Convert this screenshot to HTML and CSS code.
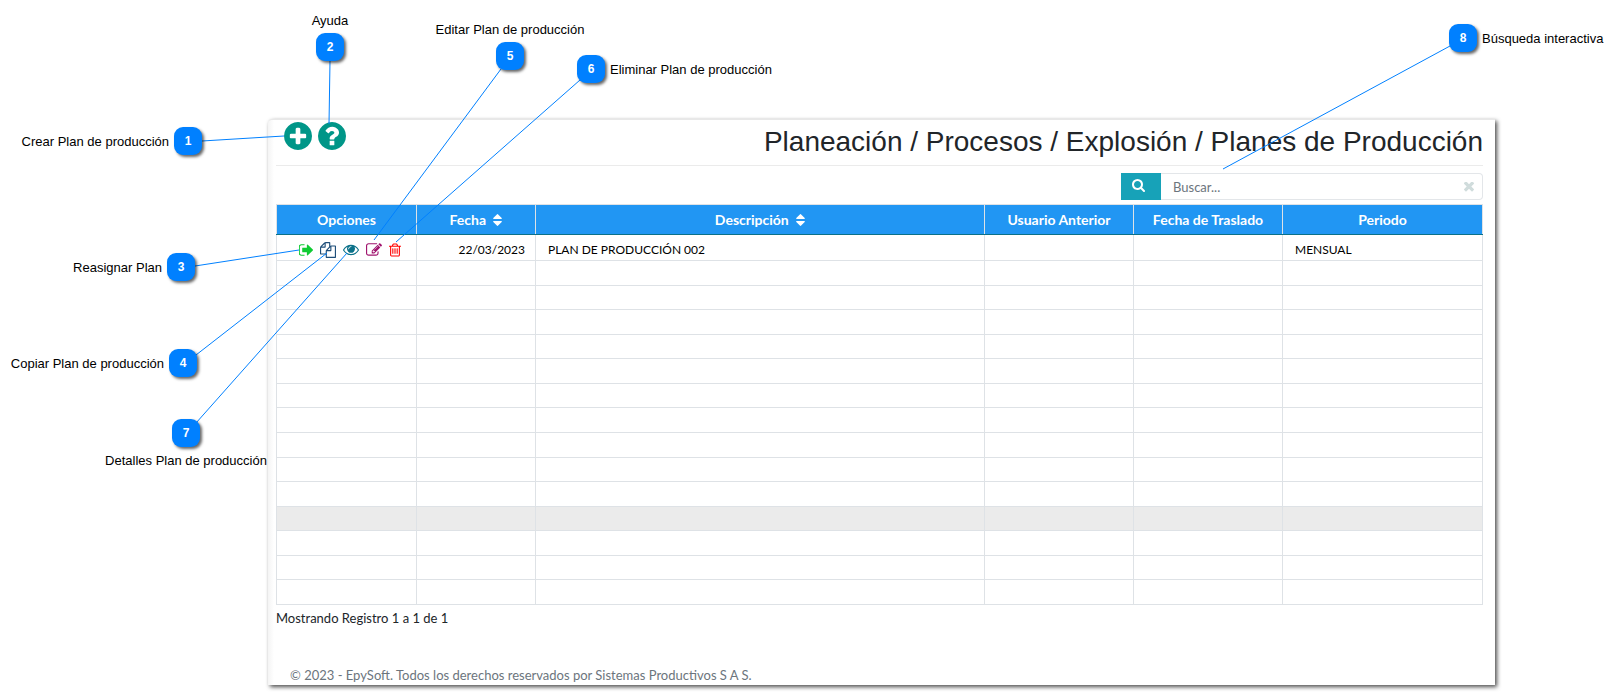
FILE: index.html
```html
<!DOCTYPE html>
<html lang="es">
<head>
<meta charset="utf-8">
<title>Planes de Producción</title>
<link rel="stylesheet" href="styles.css">
</head>
<body>
<main class="panel">
  <header class="panel-header">
    <div class="main-actions">
      <button class="icon-button" type="button" aria-label="Crear Plan de producción">
        <svg class="icon-round" viewBox="0 128 1536 1536"><path d="M1216 960v-128q0-26-19-45t-45-19h-256v-256q0-26-19-45t-45-19h-128q-26 0-45 19t-19 45v256h-256q-26 0-45 19t-19 45v128q0 26 19 45t45 19h256v256q0 26 19 45t45 19h128q26 0 45-19t19-45v-256h256q26 0 45-19t19-45zm320-64q0 209-103 385.500t-279.500 279.500-385.500 103-385.500-103-279.500-279.500-103-385.500 103-385.500 279.500-279.500 385.500-103 385.500 103 279.500 279.500 103 385.500z"/></svg>
      </button>
      <button class="icon-button" type="button" aria-label="Ayuda">
        <svg class="icon-round" viewBox="128 128 1536 1536"><path d="M1024 1376v-192q0-14-9-23t-23-9h-192q-14 0-23 9t-9 23v192q0 14 9 23t23 9h192q14 0 23-9t9-23zm256-672q0-88-55.500-163t-138.500-116-170-41q-243 0-371 213-15 24 8 42l132 100q7 6 19 6 16 0 25-12 53-68 86-92 34-24 86-24 48 0 85.500 26t37.500 59q0 38-20 61t-68 45q-63 28-115.500 86.500t-52.500 125.500v36q0 14 9 23t23 9h192q14 0 23-9t9-23q0-19 21.500-49.500t54.500-49.500q32-18 49-28.500t46-35 44.500-48 28-60.500 12.500-81zm384 192q0 209-103 385.500t-279.500 279.500-385.500 103-385.500-103-279.500-279.500-103-385.500 103-385.500 279.500-279.500 385.500-103 385.500 103 279.500 279.500 103 385.500z"/></svg>
      </button>
    </div>
    <h1 class="title">Planeación / Procesos / Explosión / Planes de Producción</h1>
  </header>

  <form class="search">
    <button class="search-button" type="button" aria-label="Buscar">
      <svg class="icon-search" viewBox="64 128 1664 1664"><path d="M1216 832q0-185-131.500-316.500t-316.500-131.500-316.500 131.500-131.500 316.500 131.500 316.500 316.500 131.500 316.500-131.500 131.500-316.500zm512 832q0 52-38 90t-90 38q-54 0-90-38l-343-342q-179 124-399 124-143 0-273.500-55.500t-225-150-150-225-55.500-273.500 55.500-273.500 150-225 225-150 273.500-55.500 273.500 55.500 225 150 150 225 55.500 273.500q0 220-124 399l343 343q37 37 37 90z"/></svg>
    </button>
    <div class="search-field">
      <input class="search-input" type="text" placeholder="Buscar..." aria-label="Buscar">
      <button class="icon-button clear" type="button" aria-label="Limpiar">
        <svg class="icon-clear" viewBox="302 434 1188 1188"><path d="M1490 1322q0 40-28 68l-136 136q-28 28-68 28t-68-28l-294-294-294 294q-28 28-68 28t-68-28l-136-136q-28-28-28-68t28-68l294-294-294-294q-28-28-28-68t28-68l136-136q28-28 68-28t68 28l294 294 294-294q28-28 68-28t68 28l136 136q28 28 28 68t-28 68l-294 294 294 294q28 28 28 68z"/></svg>
      </button>
    </div>
  </form>

  <table class="grid">
    <colgroup>
      <col class="col-options"><col class="col-date"><col><col class="col-user"><col class="col-user"><col class="col-period">
    </colgroup>
    <thead>
      <tr>
        <th>Opciones</th>
        <th>Fecha <svg class="icon-sort" viewBox="384 192 1024 1408"><path d="M1408 1088q0 26-19 45l-448 448q-19 19-45 19t-45-19l-448-448q-19-19-19-45t19-45 45-19h896q26 0 45 19t19 45zm0-384q0 26-19 45t-45 19h-896q-26 0-45-19t-19-45 19-45l448-448q19-19 45-19t45 19l448 448q19 19 19 45z"/></svg></th>
        <th>Descripción <svg class="icon-sort" viewBox="384 192 1024 1408"><path d="M1408 1088q0 26-19 45l-448 448q-19 19-45 19t-45-19l-448-448q-19-19-19-45t19-45 45-19h896q26 0 45 19t19 45zm0-384q0 26-19 45t-45 19h-896q-26 0-45-19t-19-45 19-45l448-448q19-19 45-19t45 19l448 448q19 19 19 45z"/></svg></th>
        <th>Usuario Anterior</th>
        <th>Fecha de Traslado</th>
        <th>Periodo</th>
      </tr>
    </thead>
    <tbody>
      <tr class="record">
        <td>
          <div class="row-actions">
            <button class="icon-button reassign" type="button" aria-label="Reasignar Plan"><svg class="icon-s" viewBox="96 128 1536 1536"><path d="M704 1440q0 4 1 20t.5 26.500-3 23.500-10 19.500-20.500 6.500h-320q-119 0-203.500-84.500t-84.500-203.500v-704q0-119 84.500-203.500t203.500-84.500h320q13 0 22.500 9.500t9.500 22.500q0 4 1 20t.5 26.500-3 23.500-10 19.500-20.500 6.500h-320q-66 0-113 47t-47 113v704q0 66 47 113t113 47h312l11.500 1 11.500 3 8 5.500 7 9 2 13.500zm928-544q0 26-19 45l-544 544q-19 19-45 19t-45-19-19-45v-288h-448q-26 0-45-19t-19-45v-384q0-26 19-45t45-19h448v-288q0-26 19-45t45-19 45 19l544 544q19 19 19 45z"/></svg></button>
            <button class="icon-button copy" type="button" aria-label="Copiar Plan de producción"><svg class="icon-m" viewBox="0 0 1792 1792"><path d="M1696 384q40 0 68 28t28 68v1216q0 40-28 68t-68 28h-960q-40 0-68-28t-28-68v-288h-544q-40 0-68-28t-28-68v-672q0-40 20-88t48-76l408-408q28-28 76-48t88-20h416q40 0 68 28t28 68v328q68-40 128-40h416zm-544 213l-299 299h299v-299zm-640-384l-299 299h299v-299zm196 647l316-316v-416h-384v416q0 40-28 68t-68 28h-416v640h512v-256q0-40 20-88t48-76zm956 804v-1152h-384v416q0 40-28 68t-68 28h-416v640h896z"/></svg></button>
            <button class="icon-button view" type="button" aria-label="Detalles Plan de producción"><svg class="icon-m" viewBox="0 64 1792 1792"><path d="M1664 960q-152-236-381-353 61 104 61 225 0 185-131.500 316.500t-316.500 131.500-316.500-131.500-131.500-316.500q0-121 61-225-229 117-381 353 133 205 333.500 326.500t434.500 121.500 434.500-121.500 333.500-326.500zm-720-384q0-20-14-34t-34-14q-125 0-214.500 89.500t-89.500 214.500q0 20 14 34t34 14 34-14 14-34q0-86 61-147t147-61q20 0 34-14t14-34zm848 384q0 34-20 69-140 230-376.500 368.500t-499.500 138.500-499.500-139-376.500-368q-20-35-20-69t20-69q140-229 376.500-368t499.500-139 499.500 139 376.500 368q20 35 20 69z"/></svg></button>
            <button class="icon-button edit" type="button" aria-label="Editar Plan de producción"><svg class="icon-m" viewBox="0 0 1792 1792"><path d="M888 1184l116-116-152-152-116 116v56h96v96h56zm440-720q-16-16-33 1l-350 350q-17 17-1 33t33-1l350-350q17-17 1-33zm80 594v190q0 119-84.500 203.500t-203.500 84.500h-832q-119 0-203.500-84.500t-84.500-203.500v-832q0-119 84.500-203.500t203.500-84.500h832q63 0 117 25 15 7 18 23 3 17-9 29l-49 49q-14 14-32 8-23-6-45-6h-832q-66 0-113 47t-47 113v832q0 66 47 113t113 47h832q66 0 113-47t47-113v-126q0-13 9-22l64-64q15-15 35-7t20 29zm-96-738l288 288-672 672h-288v-288zm444 132l-92 92-288-288 92-92q28-28 68-28t68 28l152 152q28 28 28 68t-28 68z"/></svg></button>
            <button class="icon-button remove" type="button" aria-label="Eliminar Plan de producción"><svg class="icon-trash" viewBox="192 128 1408 1536"><path d="M704 736v576q0 14-9 23t-23 9h-64q-14 0-23-9t-9-23v-576q0-14 9-23t23-9h64q14 0 23 9t9 23zm256 0v576q0 14-9 23t-23 9h-64q-14 0-23-9t-9-23v-576q0-14 9-23t23-9h64q14 0 23 9t9 23zm256 0v576q0 14-9 23t-23 9h-64q-14 0-23-9t-9-23v-576q0-14 9-23t23-9h64q14 0 23 9t9 23zm128 724v-948h-896v948q0 22 7 40.500t14.500 27 10.500 8.500h832q3 0 10.500-8.500t14.500-27 7-40.500zm-672-1076h448l-48-117q-7-9-17-11h-317q-10 2-17 11zm928 32v64q0 14-9 23t-23 9h-96v948q0 83-47 143.500t-113 60.500h-832q-66 0-113-58.500t-47-141.500v-952h-96q-14 0-23-9t-9-23v-64q0-14 9-23t23-9h309l70-167q15-37 54-63t79-26h320q40 0 79 26t54 63l70 167h309q14 0 23 9t9 23z"/></svg></button>
          </div>
        </td>
        <td class="date">22/03/2023</td>
        <td>PLAN DE PRODUCCIÓN 002</td>
        <td></td>
        <td></td>
        <td>MENSUAL</td>
      </tr>
      <tr><td></td><td></td><td></td><td></td><td></td><td></td></tr>
      <tr><td></td><td></td><td></td><td></td><td></td><td></td></tr>
      <tr><td></td><td></td><td></td><td></td><td></td><td></td></tr>
      <tr><td></td><td></td><td></td><td></td><td></td><td></td></tr>
      <tr><td></td><td></td><td></td><td></td><td></td><td></td></tr>
      <tr><td></td><td></td><td></td><td></td><td></td><td></td></tr>
      <tr><td></td><td></td><td></td><td></td><td></td><td></td></tr>
      <tr><td></td><td></td><td></td><td></td><td></td><td></td></tr>
      <tr><td></td><td></td><td></td><td></td><td></td><td></td></tr>
      <tr><td></td><td></td><td></td><td></td><td></td><td></td></tr>
      <tr class="highlight"><td></td><td></td><td></td><td></td><td></td><td></td></tr>
      <tr><td></td><td></td><td></td><td></td><td></td><td></td></tr>
      <tr><td></td><td></td><td></td><td></td><td></td><td></td></tr>
      <tr><td></td><td></td><td></td><td></td><td></td><td></td></tr>
    </tbody>
  </table>
  <p class="summary">Mostrando Registro 1 a 1 de 1</p>
  <footer class="footer">© 2023 - EpySoft. Todos los derechos reservados por Sistemas Productivos S A S.</footer>
</main>

<svg class="leaders leaders-left" width="640" height="480" viewBox="0 0 640 480" aria-hidden="true">
  <path d="M202 141L284 136M330 61L329 124M195 266L299 250M196 355L327 253M196 423L347 253M501 69L374 240M580 80L396 242"/>
</svg>
<svg class="leaders leaders-right" width="240" height="130" viewBox="0 0 240 130" aria-hidden="true">
  <path d="M235 6L8 129"/>
</svg>

<div class="callout c1"><span class="label before">Crear Plan de producción</span><span class="badge">1</span></div>
<div class="callout c2"><span class="label above">Ayuda</span><span class="badge">2</span></div>
<div class="callout c3"><span class="label before">Reasignar Plan</span><span class="badge">3</span></div>
<div class="callout c4"><span class="label before">Copiar Plan de producción</span><span class="badge">4</span></div>
<div class="callout c5"><span class="label above">Editar Plan de producción</span><span class="badge">5</span></div>
<div class="callout c6"><span class="badge">6</span><span class="label after">Eliminar Plan de producción</span></div>
<div class="callout c7"><span class="badge">7</span><span class="label below">Detalles Plan de producción</span></div>
<div class="callout c8"><span class="badge">8</span><span class="label after">Búsqueda interactiva</span></div>
</body>
</html>
```

FILE: styles.css
```css
* {
  box-sizing: border-box;
}

body {
  position: relative;
  margin: 0;
  padding: 119px 123px 9px 268px;
  background: #fff;
  color: #212529;
  font-family: Lato, sans-serif;
  font-size: 13px;
}

svg {
  display: block;
  fill: currentColor;
}

button {
  font: inherit;
  cursor: pointer;
}

.panel {
  padding: 0 12px 0 8px;
  border-top: 1px solid #e8e8e8;
  border-top-left-radius: 4px;
  background: linear-gradient(to right, #f4f4f4, #fff 6px);
  box-shadow: 2px 2px 4px rgba(0, 0, 0, 0.7);
}

.panel-header {
  display: flex;
  align-items: flex-start;
  justify-content: space-between;
  height: 46px;
  border-bottom: 1px solid #ebebeb;
}

.main-actions {
  display: flex;
  gap: 6px;
  padding: 2px 8px;
}

.icon-button {
  flex: none;
  padding: 0;
  border: 0;
  background: none;
}

.main-actions .icon-button {
  color: #009688;
}

.icon-round {
  width: 28px;
  height: 28px;
}

.title {
  margin: 0;
  padding-top: 5px;
  font: 400 28px/34px "Liberation Sans", Arial, sans-serif;
}

.search {
  display: flex;
  justify-content: flex-end;
  margin: 7px 0 4px;
  height: 27px;
}

.search-button {
  width: 40px;
  padding: 0 11px 2px;
  border: 0;
  background: #17a2b8;
  color: #fff;
}

.icon-search {
  width: 13px;
  height: 13px;
}

.search-field {
  display: flex;
  align-items: center;
  width: 322px;
  padding: 0 8px 0 12px;
  border: 1px solid #e3e6e9;
  border-left: 0;
  border-radius: 0 4px 4px 0;
  background: #fff;
}

.search-input {
  flex: 1;
  min-width: 0;
  padding: 0;
  border: 0;
  outline: 0;
  background: none;
  color: #495057;
  font: 13px/20px Lato, sans-serif;
}

.search-input::placeholder {
  color: #6c757d;
  opacity: 1;
}

.clear {
  color: #d0dcdc;
}

.icon-clear {
  width: 10px;
  height: 10px;
}

.grid {
  width: 100%;
  height: 401px;
  border-collapse: collapse;
  table-layout: fixed;
  background: #fff;
  color: #000;
  font-size: 12px;
}

.col-options { width: 140px; }
.col-date { width: 119px; }
.col-user { width: 149px; }
.col-period { width: 200px; }

.grid th,
.grid td {
  border: 1px solid #dee2e6;
}

.grid th {
  height: 30px;
  padding: 0;
  border-bottom-color: #0b7189;
  background: #2196f3;
  color: #fff;
  font-size: 14px;
  font-weight: 700;
  line-height: 20px;
}

.icon-sort {
  display: inline-block;
  width: 9px;
  height: 12px;
  margin-left: 4px;
  vertical-align: -1px;
}

.grid td {
  padding: 0 12px;
}

.grid .record td {
  height: 26px;
  padding-top: 4px;
}

.grid td.date {
  padding-right: 10px;
  text-align: right;
}

.highlight {
  background: #ebebeb;
}

.row-actions {
  display: flex;
  align-items: center;
  gap: 7px;
  padding-left: 10px;
}

.icon-s { width: 14px; height: 14px; }
.icon-m { width: 16px; height: 16px; }
.icon-trash { width: 12px; height: 14px; }

.reassign { color: #0fcb32; }
.copy { color: #1f4e79; }
.view { color: #0b7189; }
.edit { color: #a0146e; }
.remove { color: #f00; }

.summary {
  margin: 3px 0 0;
  line-height: 20px;
}

.footer {
  margin-top: 37px;
  padding-left: 14px;
  color: #6c757d;
  line-height: 20px;
}

/* Numbered callouts laid over the window */
.leaders {
  position: absolute;
  fill: none;
  stroke: #0080ff;
  stroke-width: 1;
  pointer-events: none;
}

.leaders-left { top: 0; left: 0; }
.leaders-right { top: 40px; right: 163px; }

.callout {
  position: absolute;
  width: 28px;
  color: #000;
  font: 13px/16px "Liberation Sans", Arial, sans-serif;
}

.badge {
  display: flex;
  align-items: center;
  justify-content: center;
  height: 28px;
  border-radius: 9px;
  background: #0080ff;
  box-shadow: 2px 2px 3px rgba(0, 0, 0, 0.6);
  color: #fff;
  font-weight: 700;
  font-size: 12px;
}

.label {
  position: absolute;
  white-space: nowrap;
}

.before { top: 7px; right: 33px; }
.after { top: 7px; left: 33px; }
.above { bottom: 32px; left: 50%; transform: translateX(-50%); }
.below { top: 34px; left: 50%; transform: translateX(-50%); }

.c1 { top: 127px; left: 174px; }
.c2 { top: 33px; left: 316px; }
.c3 { top: 253px; left: 167px; }
.c4 { top: 349px; left: 169px; }
.c5 { top: 42px; left: 496px; }
.c6 { top: 55px; left: 577px; }
.c7 { top: 419px; left: 172px; }
.c8 { top: 24px; right: 141px; }
```
